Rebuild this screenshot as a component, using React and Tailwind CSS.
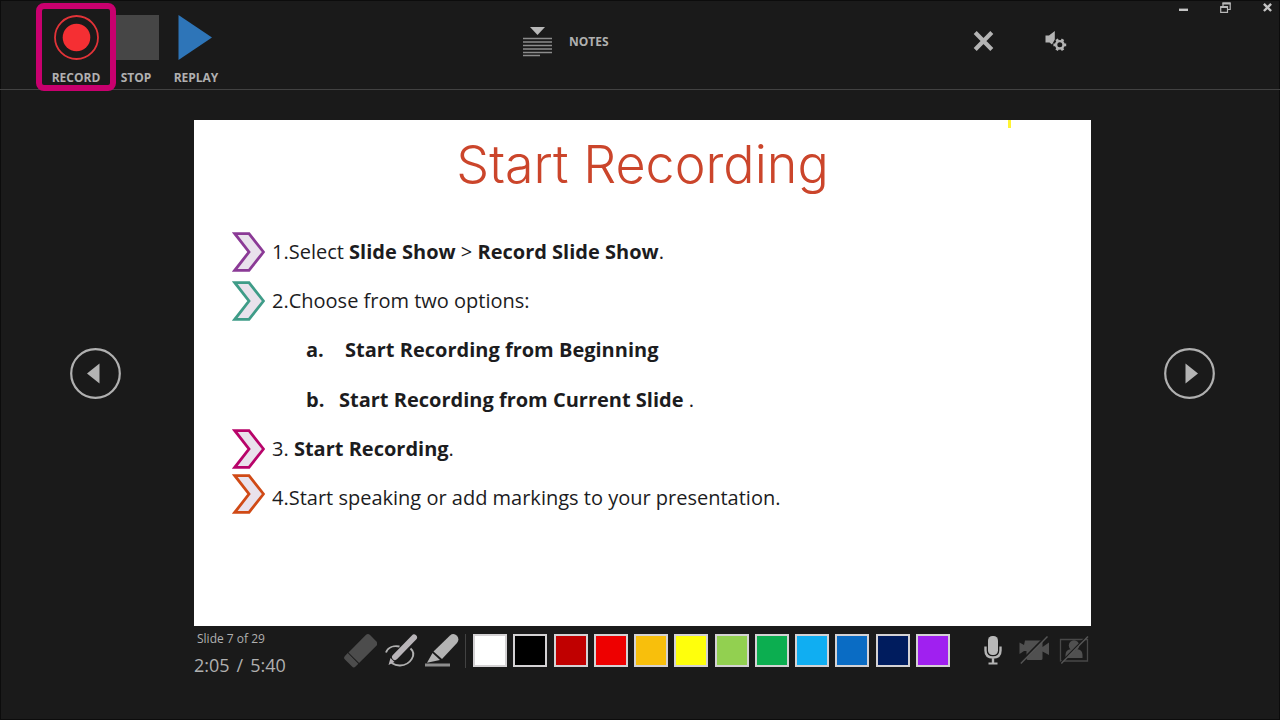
const steps = [
  { id: 1, color: "#8b3a96", align: "self-center", body: <>1.Select <b>Slide Show</b> &gt; <b>Record Slide Show</b>.</> },
  { id: 2, color: "#3f9c88", align: "self-center", body: <>2.Choose from two options:</> },
  { id: "a", marker: "a.", gap: "w-[39px]", body: <b>Start Recording from Beginning</b> },
  { id: "b", marker: "b.", gap: "w-[33px]", body: <><b>Start Recording from Current Slide</b> .</> },
  { id: 3, color: "#b8046a", align: "self-center", body: <>3. <b>Start Recording</b>.</> },
  { id: 4, color: "#d04a16", align: "self-start", body: <>4.Start speaking or add markings to your presentation.</> },
];

const swatches = [
  ["White", "bg-white"],
  ["Black", "bg-black"],
  ["Dark red", "bg-[#c00000]"],
  ["Red", "bg-[#ee0000]"],
  ["Orange", "bg-[#f8bf0c]"],
  ["Yellow", "bg-[#ffff0c]"],
  ["Light green", "bg-[#92d050]"],
  ["Green", "bg-[#0cae50]"],
  ["Light blue", "bg-[#10aef2]"],
  ["Blue", "bg-[#0a6cc4]"],
  ["Dark blue", "bg-[#001c5e]"],
  ["Purple", "bg-[#a020f0]"],
];

function Chevron({ color, align }) {
  return (
    <svg className={`h-10 w-[33px] shrink-0 ${align}`} viewBox="0 0 33 40" aria-hidden="true">
      <path d="M2.800 1.700H17L31.500 20L17 38.300H2.800L17 20Z" fill="#e9e2ec" stroke={color} strokeWidth="2.800" />
    </svg>
  );
}

function TransportButton({ label, highlighted, children }) {
  return (
    <button type="button" className={`relative flex w-[60px] flex-col items-center pt-[15px] ${highlighted ? "z-10" : ""}`}>
      {children}
      <span className="mt-[9px] text-xs leading-[18px] font-bold">{label}</span>
      {highlighted && (
        <span className="absolute -inset-x-[10px] top-[3px] h-[88px] rounded-lg border-6 border-[#c8006e]" />
      )}
    </button>
  );
}

function Header() {
  return (
    <header className="grid h-[90px] grid-cols-[523fr_450fr_307fr] border-b border-[#424242]">
      <div className="flex items-start pl-[46px]">
        <TransportButton label="RECORD" highlighted>
          <svg className="h-[45px] w-[45px]" viewBox="0 0 45 45" aria-hidden="true">
            <circle cx="22.500" cy="22.500" r="21.500" fill="none" stroke="#e23338" strokeWidth="1.800" />
            <circle cx="22.500" cy="22.500" r="13.800" fill="#f52f33" />
          </svg>
        </TransportButton>
        <TransportButton label="STOP">
          <span className="h-[45px] w-[45px] bg-[#464646]" />
        </TransportButton>
        <TransportButton label="REPLAY">
          <svg className="h-[45px] w-[45px]" viewBox="0 0 45 45" aria-hidden="true">
            <path d="M4.500 0L38 22.500L4.500 45Z" fill="#2e75b8" />
          </svg>
        </TransportButton>
      </div>

      <div className="flex items-start pt-[26px]">
        <button type="button" className="flex items-center gap-[17px] text-xs font-bold">
          <svg className="h-[31px] w-[29px]" viewBox="0 0 29 31" aria-hidden="true">
            <path d="M7 1H22L14.500 9Z" fill="#b8b8b8" />
            <path d="M0 12.500H29M0 16H29M0 19.500H29M0 23H29M0 26.500H29M0 29.500H17" stroke="#8c8c8c" strokeWidth="1.300" />
          </svg>
          NOTES
        </button>
      </div>

      <div className="flex items-start justify-between pr-2">
        <div className="flex gap-[50px] pt-[30px]">
          <button type="button" aria-label="Clear">
            <svg className="size-[22px]" viewBox="0 0 22 22" aria-hidden="true">
              <path d="M2.200 2.500L18.800 19.500M18.800 2.500L2.200 19.500" stroke="#b4b4b4" strokeWidth="4.200" />
            </svg>
          </button>
          <button type="button" aria-label="Audio settings">
            <svg className="size-[22px]" viewBox="0 0 22 22" aria-hidden="true">
              <path d="M0.500 5.500H4L9.800 1V9.500L7 14.500L4.500 12.500H0.500Z" fill="#b4b4b4" />
              <g transform="translate(14.800 14.800)" fill="none" stroke="#b4b4b4">
                <circle r="3.700" strokeWidth="2.400" />
                <path d="M6.400 0H4M-6.400 0H-4M3.200 5.500L2 3.500M-3.200 5.500L-2 3.500M3.200 -5.500L2 -3.500M-3.200 -5.500L-2 -3.500" strokeWidth="2.800" />
              </g>
            </svg>
          </button>
        </div>
        <div className="flex gap-8 pt-0.5">
          <button type="button" aria-label="Minimize">
            <svg className="h-[11px] w-[9px]" viewBox="0 0 9 11" aria-hidden="true">
              <path d="M0 7.800H9" stroke="#c4c4c4" strokeWidth="2.400" />
            </svg>
          </button>
          <button type="button" aria-label="Restore">
            <svg className="size-[11px]" viewBox="0 0 11 11" aria-hidden="true">
              <path d="M3 4V1.200H10.200V7.500H7.500M0.700 4.800H7.500V10.300H0.700Z" fill="none" stroke="#b8b8b8" strokeWidth="1.200" />
              <path d="M2.500 1.500H10.500M0.500 5H8" stroke="#b8b8b8" strokeWidth="1.800" />
            </svg>
          </button>
          <button type="button" aria-label="Close">
            <svg className="h-[11px] w-[9px]" viewBox="0 0 9 11" aria-hidden="true">
              <path d="M0.900 1.800L8.100 9M8.100 1.800L0.900 9" stroke="#c4c4c4" strokeWidth="2.400" />
            </svg>
          </button>
        </div>
      </div>
    </header>
  );
}

function NavButton({ label, path }) {
  return (
    <button type="button" aria-label={label}>
      <svg className="size-[51px]" viewBox="0 0 51 51" aria-hidden="true">
        <circle cx="25.500" cy="25.500" r="24.300" fill="none" stroke="#b0b0b0" strokeWidth="2.200" />
        <path d={path} fill="#b4b4b4" />
      </svg>
    </button>
  );
}

function Slide() {
  return (
    <section className="relative aspect-[897/506] bg-white text-[#1c1c1e]">
      <span className="absolute top-0 left-[91%] -ml-0.5 h-2 w-[3px] bg-[#fff433]" />
      <h1 className="pt-3 text-center font-['Inter','Lato',sans-serif] text-[52px] leading-[66px] font-light text-[#cb452b]">
        Start Recording
      </h1>
      <ol className="mt-[29px] grid h-[296px] auto-rows-fr pl-[38px] text-[20px]">
        {steps.map((step) => (
          <li key={step.id} className="flex items-center">
            {step.marker ? (
              <>
                <b className={`ml-[74px] ${step.gap}`}>{step.marker}</b>
                <span>{step.body}</span>
              </>
            ) : (
              <>
                <Chevron color={step.color} align={step.align} />
                <span className="ml-[7px]">{step.body}</span>
              </>
            )}
          </li>
        ))}
      </ol>
    </section>
  );
}

function Toolbar() {
  return (
    <footer className="flex items-start pt-2">
      <div className="w-[149px]">
        <p className="pl-[3px] text-xs leading-[10px]">Slide 7 of 29</p>
        <p className="mt-2 flex gap-[7px] text-[18px] leading-[26px]">
          <span>2:05</span>
          <span>/</span>
          <span>5:40</span>
        </p>
      </div>
      <div className="flex gap-[7px]">
        <button type="button" aria-label="Eraser">
          <svg className="size-[34px]" viewBox="0 0 34 34" aria-hidden="true">
            <g transform="translate(17.500 17) rotate(-45)" fill="#4c4c4c">
              <path d="M-9.500 -7.500H15Q18 -7.500 18 -4.500V4.500Q18 7.500 15 7.500H-9.500Z" />
              <path d="M-10.500 -7.500H-14.500Q-17 -7.500 -17 -5V5Q-17 7.500 -14.500 7.500H-10.500Z" />
            </g>
          </svg>
        </button>
        <button type="button" aria-label="Pen">
          <svg className="size-[34px]" viewBox="0 0 34 34" aria-hidden="true">
            <path d="M2 18.500C4 13 10 11.500 15.500 12.500M26.500 14.500C33 20 27 31 16 31.500C12 31.700 10 30.500 7.500 29" fill="none" stroke="#b0b0b0" strokeWidth="1.900" />
            <path d="M11 23L30 3.500" stroke="#b8b4b8" strokeWidth="6" strokeLinecap="round" />
            <path d="M6.500 24L10.500 28L4.500 31Z" fill="#b8b4b8" />
          </svg>
        </button>
        <button type="button" aria-label="Highlighter">
          <svg className="size-[34px]" viewBox="0 0 34 34" aria-hidden="true">
            <path d="M0 31H25" stroke="#8e8e8e" strokeWidth="3" />
            <path d="M8.500 17.500L25 1.500Q28.500 -1.500 32 1.800Q34.800 5.500 32 9L17 25Z" fill="#b4b4b4" />
            <path d="M7.500 19L15 26L2 28.800Z" fill="#b4b4b4" />
          </svg>
        </button>
      </div>
      <div className="ml-[6px] h-[34px] w-px bg-[#424242]" />
      <div className="ml-[7px] flex w-[477px] justify-between">
        {swatches.map(([name, bg]) => (
          <button key={name} type="button" aria-label={name} className={`h-[33px] w-[34px] border-2 border-[#d4d2d4] ${bg}`} />
        ))}
      </div>
      <div className="ml-auto flex items-start gap-[9px] pr-[2px]">
        <button type="button" aria-label="Microphone" className="mr-[7px]">
          <svg className="h-[32px] w-[18px]" viewBox="0 0 18 32" aria-hidden="true">
            <rect x="4" y="2" width="10" height="19" rx="4.500" fill="#b8b8b8" />
            <path d="M1.500 12.500V16.500Q1.500 23.500 9 23.500Q16.500 23.500 16.500 16.500V12.500M9 24V29" fill="none" stroke="#b4b4b4" strokeWidth="2.400" />
            <path d="M4.500 29.500H13.500" stroke="#b4b4b4" strokeWidth="2" />
          </svg>
        </button>
        <button type="button" aria-label="Camera">
          <svg className="h-[32px] w-[32px]" viewBox="0 0 32 32" aria-hidden="true">
            <path d="M7 6.500H23Q24.500 6.500 24.500 8V13L31 8.500V21L24.500 17.500V24.500Q24.500 26 23 26H10Q8.500 26 8.500 24.500V17H6L1.500 20V8.500L6 11Z" fill="#505050" />
            <path d="M2.200 28.500L28.900 1.500" stroke="#1a1a1a" strokeWidth="2.400" />
            <path d="M2.800 29.500L29.500 2.500" stroke="#565656" strokeWidth="1.400" />
          </svg>
        </button>
        <button type="button" aria-label="Background preview">
          <svg className="h-[32px] w-[30px]" viewBox="0 0 30 32" aria-hidden="true">
            <path d="M1.500 5.500H28.500V27H1.500Z" fill="none" stroke="#484848" strokeWidth="1.300" />
            <circle cx="15" cy="11.500" r="5.200" fill="#505050" />
            <path d="M6.500 24V20.500Q7 15.500 11.500 15.200L15 17L18.500 15.200Q23 15.500 23.500 20.500V24Z" fill="#505050" />
            <path d="M1.700 28.800L28.400 1.800" stroke="#1a1a1a" strokeWidth="1.800" />
            <path d="M2.300 29.500L29 2.500" stroke="#565656" strokeWidth="1.400" />
          </svg>
        </button>
      </div>
    </footer>
  );
}

export default function App() {
  return (
    <div className="min-h-screen bg-[#1a1a1a] font-['Open_Sans','Noto_Sans',sans-serif] text-[#b0b0b0] inset-ring inset-ring-[#0c0c0c]">
      <Header />
      <main className="grid grid-cols-[194px_1fr_189px] pt-[30px]">
        <div className="flex items-center pl-[70px]">
          <NavButton label="Previous slide" path="M17 25.500L29.500 15.500V35.500Z" />
        </div>
        <Slide />
        <div className="flex items-center pl-[73px]">
          <NavButton label="Next slide" path="M34 25.500L21.500 15.500V35.500Z" />
        </div>
        <div className="col-start-2">
          <Toolbar />
        </div>
      </main>
    </div>
  );
}
